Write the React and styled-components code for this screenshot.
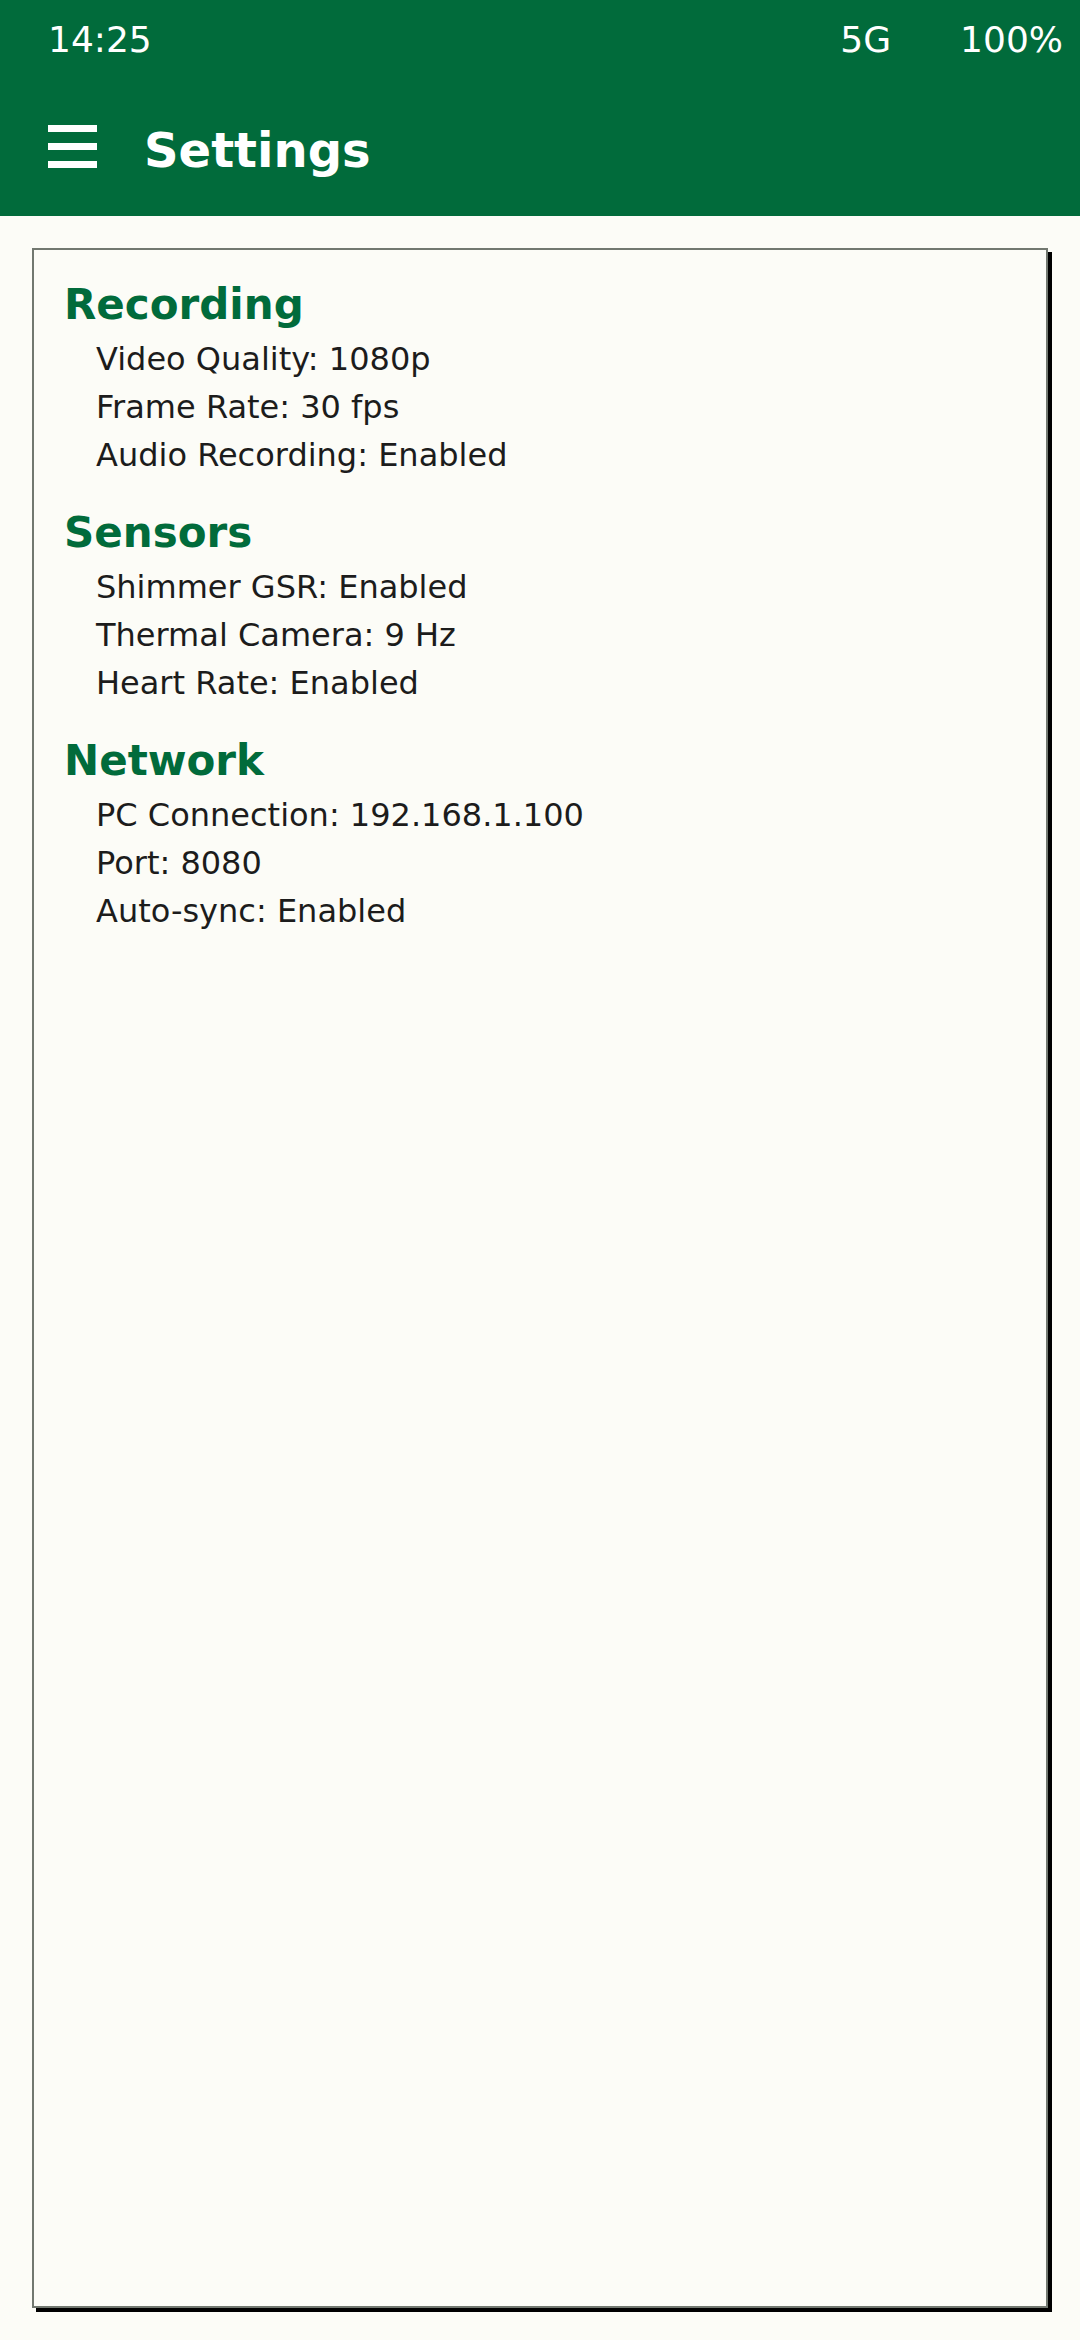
import React from "react";
import styled, { createGlobalStyle } from "styled-components";

const GREEN = "#016b3b";

const GlobalStyle = createGlobalStyle`
  html, body {
    margin: 0;
    padding: 0;
    background: #fcfcf7;
    font-family: "DejaVu Sans", "Noto Sans", sans-serif;
  }
  * { box-sizing: border-box; }
`;

const Page = styled.div`
  min-height: 100vh;
  display: flex;
  flex-direction: column;
  background: #fcfcf7;
`;

const Header = styled.header`
  background: ${GREEN};
  color: #fff;
  height: 216px;
  display: flex;
  flex-direction: column;
`;

const StatusBar = styled.div`
  height: 80px;
  display: flex;
  align-items: center;
  padding: 0 17px 0 48px;
  font-size: 36px;
  line-height: 1;
  .right {
    margin-left: auto;
    display: flex;
    gap: 69px;
  }
`;

const AppBar = styled.div`
  flex: 1;
  display: flex;
  align-items: center;
  padding: 0 0 4px 48px;
  gap: 47px;
`;

const Burger = styled.div`
  width: 49px;
  display: flex;
  flex-direction: column;
  gap: 11px;
  span {
    display: block;
    height: 7px;
    background: #fff;
  }
`;

const Title = styled.h1`
  margin: 0;
  padding-top: 8px;
  font-size: 48px;
  line-height: 1;
  font-weight: bold;
`;

const Main = styled.main`
  flex: 1;
  display: flex;
  flex-direction: column;
  padding: 32px;
`;

const Card = styled.div`
  flex: 1;
  border: 2px solid #727870;
  box-shadow: 4px 4px 0 #000;
  background: #fcfcf7;
  padding: 30px 30px;
`;

const Section = styled.section`
  margin-bottom: 29px;
`;

const Heading = styled.h2`
  margin: 0 0 5px;
  color: ${GREEN};
  font-size: 42px;
  line-height: 50px;
  font-weight: bold;
`;

const Item = styled.div`
  padding-left: 32px;
  font-size: 32px;
  line-height: 48px;
  color: #1c1c1c;
`;

const sections = [
  {
    title: "Recording",
    items: ["Video Quality: 1080p", "Frame Rate: 30 fps", "Audio Recording: Enabled"],
  },
  {
    title: "Sensors",
    items: ["Shimmer GSR: Enabled", "Thermal Camera: 9 Hz", "Heart Rate: Enabled"],
  },
  {
    title: "Network",
    items: ["PC Connection: 192.168.1.100", "Port: 8080", "Auto-sync: Enabled"],
  },
];

export default function App() {
  return (
    <Page>
      <GlobalStyle />
      <Header>
        <StatusBar>
          <span>14:25</span>
          <div className="right">
            <span>5G</span>
            <span>100%</span>
          </div>
        </StatusBar>
        <AppBar>
          <Burger>
            <span />
            <span />
            <span />
          </Burger>
          <Title>Settings</Title>
        </AppBar>
      </Header>
      <Main>
        <Card>
          {sections.map((s) => (
            <Section key={s.title}>
              <Heading>{s.title}</Heading>
              {s.items.map((it) => (
                <Item key={it}>{it}</Item>
              ))}
            </Section>
          ))}
        </Card>
      </Main>
    </Page>
  );
}
